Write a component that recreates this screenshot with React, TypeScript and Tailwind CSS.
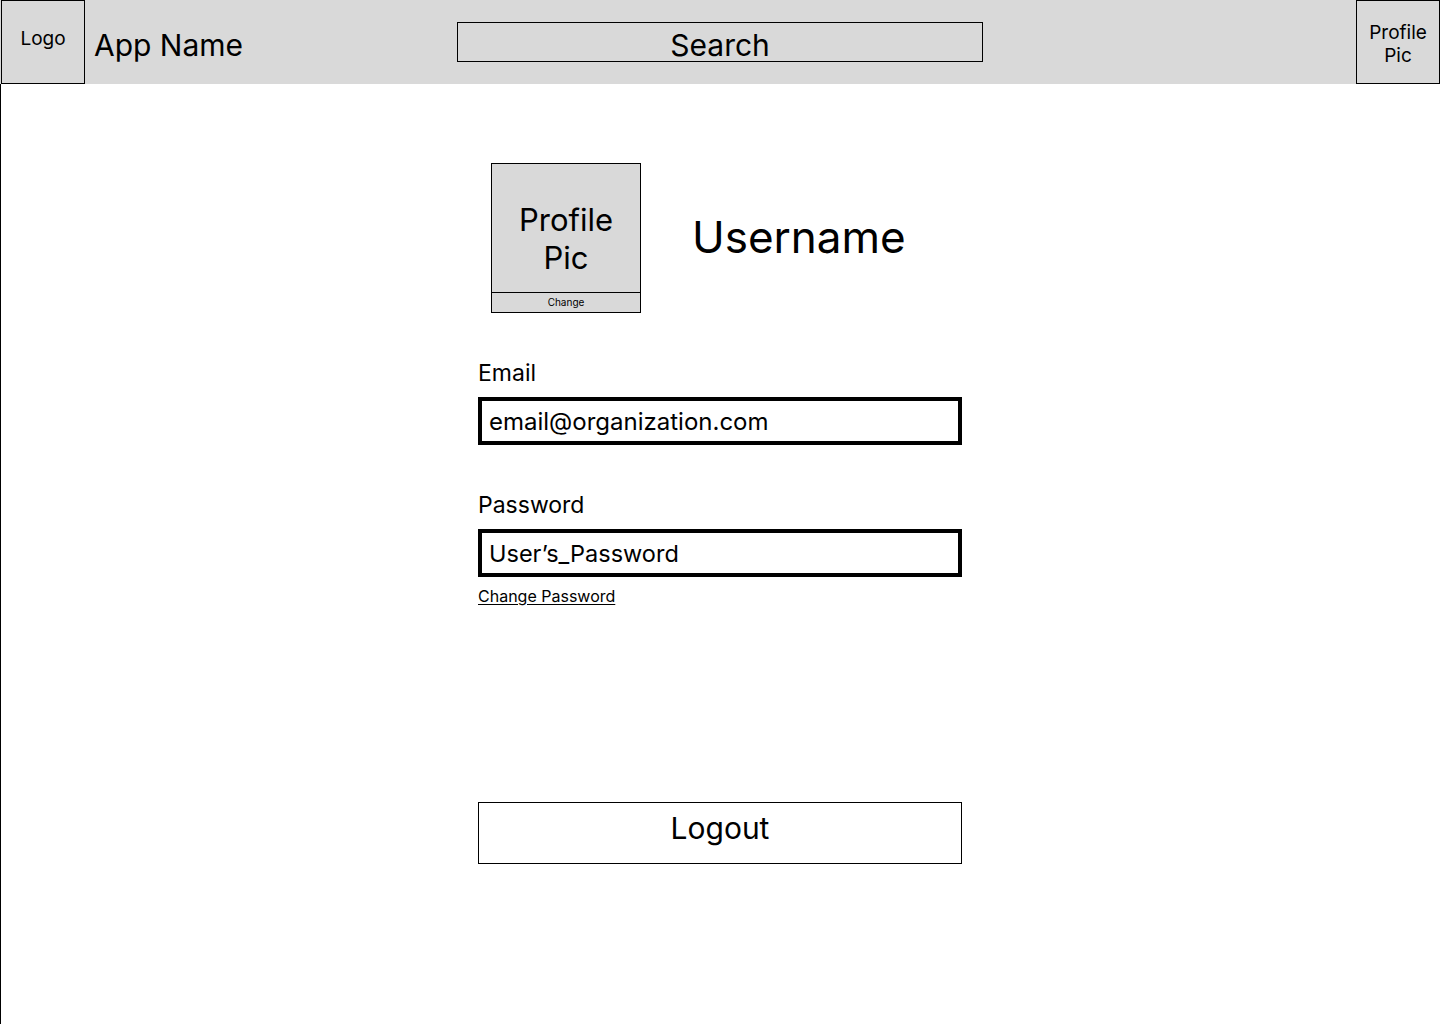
export default function App() {
  return (
    <div className="w-[1440px] h-[1024px] bg-white text-black flex flex-col" style={{ fontFamily: 'Inter, "Noto Sans", sans-serif' }}>
      <header className="h-[84px] bg-[#d9d9d9] flex items-stretch shrink-0">
        <div className="ml-[1px] w-[84px] border border-black flex items-center justify-center text-[19px] pb-[6px]">Logo</div>
        <div className="ml-[9px] flex items-center text-[30px] pt-[6px]">App Name</div>
        <div className="ml-[214px] mt-[22px] w-[526px] h-[40px] border border-black flex items-center justify-center text-[30px] pt-[6px]">Search</div>
        <div className="flex-1" />
        <div className="w-[84px] border border-black flex items-center justify-center text-center text-[19px] leading-[23px] pt-[4px]">Profile<br />Pic</div>
      </header>
      <main className="flex-1 border-l border-black flex flex-col">
        <div className="ml-[477px] w-[484px] flex flex-col">
          <div className="mt-[79px] ml-[13px] flex items-center">
            <div className="w-[150px] h-[150px] border border-black bg-[#d9d9d9] flex flex-col">
              <div className="flex-1 flex items-center justify-center text-center text-[31px] leading-[38px] pt-[21px]">Profile<br />Pic</div>
              <div className="h-[20px] border-t border-black flex items-center justify-center text-[10px]">Change</div>
            </div>
            <div className="ml-[51px] text-[44px] pb-[2px]">Username</div>
          </div>
          <div className="mt-[45px] text-[23px] leading-[30px]">Email</div>
          <div className="mt-[9px] h-[48px] border-4 border-black flex items-center pl-[7px] text-[24px] pt-[2px]">email@organization.com</div>
          <div className="mt-[45px] text-[23px] leading-[30px]">Password</div>
          <div className="mt-[9px] h-[48px] border-4 border-black flex items-center pl-[7px] text-[23.5px] pt-[2px]">User’s_Password</div>
          <div className="mt-[7px]"><span className="text-[16px] underline underline-offset-2 leading-[20px]">Change Password</span></div>
          <div className="mt-[194px] h-[62px] border border-black flex items-center justify-center text-[30px] pb-[10px]">Logout</div>
        </div>
      </main>
    </div>
  );
}
